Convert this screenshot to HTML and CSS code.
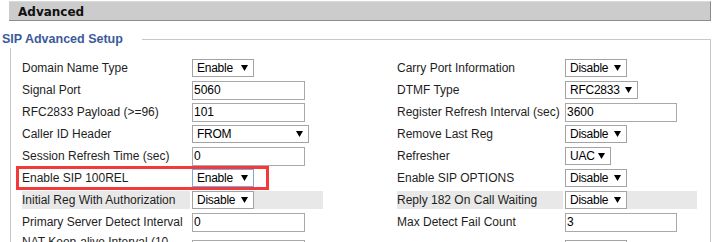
FILE: index.html
```html
<!DOCTYPE html>
<html>
<head>
<meta charset="utf-8">
<link rel="stylesheet" href="styles.css">
</head>
<body>
<div class="page">
  <div class="titlebar">Advanced</div>
  <div class="section">
    <div class="section-head">
      <span class="legend">SIP Advanced Setup</span>
      <span class="rule"></span>
    </div>
    <div class="section-body">
      <div class="grid">
        <div class="lbl">Domain Name Type</div>
        <div class="fld"><span class="sel w62"><span>Enable</span><svg class="arr" width="7" height="6" viewBox="0 0 7 6"><polygon points="0,0 7,0 3.5,6"/></svg></span></div>
        <div class="lbl2">Carry Port Information</div>
        <div class="fld"><span class="sel w62"><span>Disable</span><svg class="arr" width="7" height="6" viewBox="0 0 7 6"><polygon points="0,0 7,0 3.5,6"/></svg></span></div>

        <div class="lbl">Signal Port</div>
        <div class="fld"><span class="inp w113">5060</span></div>
        <div class="lbl2">DTMF Type</div>
        <div class="fld"><span class="sel w73"><span>RFC2833</span><svg class="arr" width="7" height="6" viewBox="0 0 7 6"><polygon points="0,0 7,0 3.5,6"/></svg></span></div>

        <div class="lbl">RFC2833 Payload (&gt;=96)</div>
        <div class="fld"><span class="inp w113">101</span></div>
        <div class="lbl2">Register Refresh Interval (sec)</div>
        <div class="fld"><span class="inp w112">3600</span></div>

        <div class="lbl">Caller ID Header</div>
        <div class="fld"><span class="sel w117"><span>FROM</span><svg class="arr" width="7" height="6" viewBox="0 0 7 6"><polygon points="0,0 7,0 3.5,6"/></svg></span></div>
        <div class="lbl2">Remove Last Reg</div>
        <div class="fld"><span class="sel w62"><span>Disable</span><svg class="arr" width="7" height="6" viewBox="0 0 7 6"><polygon points="0,0 7,0 3.5,6"/></svg></span></div>

        <div class="lbl">Session Refresh Time (sec)</div>
        <div class="fld"><span class="inp w113">0</span></div>
        <div class="lbl2">Refresher</div>
        <div class="fld"><span class="sel w46"><span>UAC</span><svg class="arr" width="7" height="6" viewBox="0 0 7 6"><polygon points="0,0 7,0 3.5,6"/></svg></span></div>

        <div class="lbl marked">Enable SIP 100REL<span class="mark"></span></div>
        <div class="fld"><span class="sel w62 focus"><span>Enable</span><svg class="arr" width="7" height="6" viewBox="0 0 7 6"><polygon points="0,0 7,0 3.5,6"/></svg></span></div>
        <div class="lbl2">Enable SIP OPTIONS</div>
        <div class="fld"><span class="sel w62"><span>Disable</span><svg class="arr" width="7" height="6" viewBox="0 0 7 6"><polygon points="0,0 7,0 3.5,6"/></svg></span></div>

        <div class="lbl hl">Initial Reg With Authorization</div>
        <div class="fld hl hl-mid"><span class="sel w62"><span>Disable</span><svg class="arr" width="7" height="6" viewBox="0 0 7 6"><polygon points="0,0 7,0 3.5,6"/></svg></span></div>
        <div class="lbl2 hl">Reply 182 On Call Waiting</div>
        <div class="fld hl"><span class="sel w62"><span>Disable</span><svg class="arr" width="7" height="6" viewBox="0 0 7 6"><polygon points="0,0 7,0 3.5,6"/></svg></span></div>

        <div class="lbl">Primary Server Detect Interval</div>
        <div class="fld"><span class="inp w113">0</span></div>
        <div class="lbl2">Max Detect Fail Count</div>
        <div class="fld"><span class="inp w112">3</span></div>

        <div class="lbl top">NAT Keep-alive Interval (10<br>- 3600)</div>
        <div class="fld"><span class="inp w113">20</span></div>
        <div class="lbl2">Keep-alive Type</div>
        <div class="fld"><span class="sel w62"><span>Disable</span><svg class="arr" width="7" height="6" viewBox="0 0 7 6"><polygon points="0,0 7,0 3.5,6"/></svg></span></div>
      </div>
    </div>
  </div>
</div>
</body>
</html>
```
FILE: styles.css
```css
html, body {
  margin: 0;
  padding: 0;
  background: #ffffff;
}
body {
  font-family: "Liberation Sans", Arial, sans-serif;
  font-size: 12px;
  color: #1e1e1e;
}
.page {
  width: 711px;
  padding-top: 1px;
}
.titlebar {
  box-sizing: border-box;
  margin-left: 9px;
  width: 702px;
  height: 20px;
  padding: 1px 0 0 9px;
  line-height: 18px;
  background: #cccccc;
  border-top: 1px solid #d9d9d9;
  border-bottom: 1px solid #8c8c8c;
  border-right: 1px solid #8c8c8c;
  font-family: "DejaVu Sans", Verdana, sans-serif;
  font-weight: bold;
  font-size: 12px;
  color: #111;
}
.section {
  margin-top: 10px;
}
.section-head {
  display: flex;
  height: 17px;
}
.legend {
  width: 140px;
  margin-left: 2px;
  line-height: 17px;
  font-family: "Liberation Sans", Arial, sans-serif;
  font-weight: bold;
  font-size: 12.5px;
  color: #3b5a9c;
  white-space: nowrap;
}
.rule {
  flex: 1;
  margin-top: 8px;
  border-top: 1px solid #c8c8c8;
  border-right: 1px solid #c8c8c8;
}
.section-body {
  margin-left: 10px;
  border-left: 1px solid #c8c8c8;
  border-right: 1px solid #c8c8c8;
  padding: 9px 0 20px 10px;
}
.grid {
  display: grid;
  grid-template-columns: 169px 134px 235px 132px;
  grid-template-rows: repeat(8, 22px) auto;
  column-gap: 2px;
}
.lbl, .lbl2, .fld {
  box-sizing: border-box;
  display: flex;
  align-items: center;
  padding: 2px 0;
  background-clip: content-box;
  white-space: nowrap;
}
.lbl {
  padding-left: 1px;
}
.lbl2 {
  padding-left: 69px;
}
.lbl.top {
  align-items: flex-start;
  white-space: normal;
  line-height: 14px;
}
.hl {
  background-color: #e8e8e8;
}
.hl-mid {
  box-shadow: inset -3px 0 0 #ffffff;
}
.marked {
  position: relative;
}
.mark {
  position: absolute;
  left: -5px;
  top: -1px;
  width: 253px;
  height: 24px;
  box-sizing: border-box;
  border: 3px solid #f23a3a;
  pointer-events: none;
}
.sel, .inp {
  box-sizing: border-box;
  display: inline-flex;
  align-items: center;
  flex: none;
  background: #ffffff;
  color: #000;
  font-size: 12px;
}
.sel {
  height: 18px;
  justify-content: space-between;
  padding: 0 5px 0 4px;
  border: 1px solid #a3a3a3;
  letter-spacing: -0.25px;
}
.sel.focus {
  border-color: #7fa9de;
}
.inp {
  height: 19px;
  padding: 0 0 0 1px;
  border: 1px solid #a9a9a9;
}
.arr {
  display: block;
  fill: #000;
}
.w46 { width: 46px; }
.w62 { width: 62px; }
.w73 { width: 73px; }
.w112 { width: 112px; }
.w113 { width: 113px; }
.w117 { width: 117px; }
```
